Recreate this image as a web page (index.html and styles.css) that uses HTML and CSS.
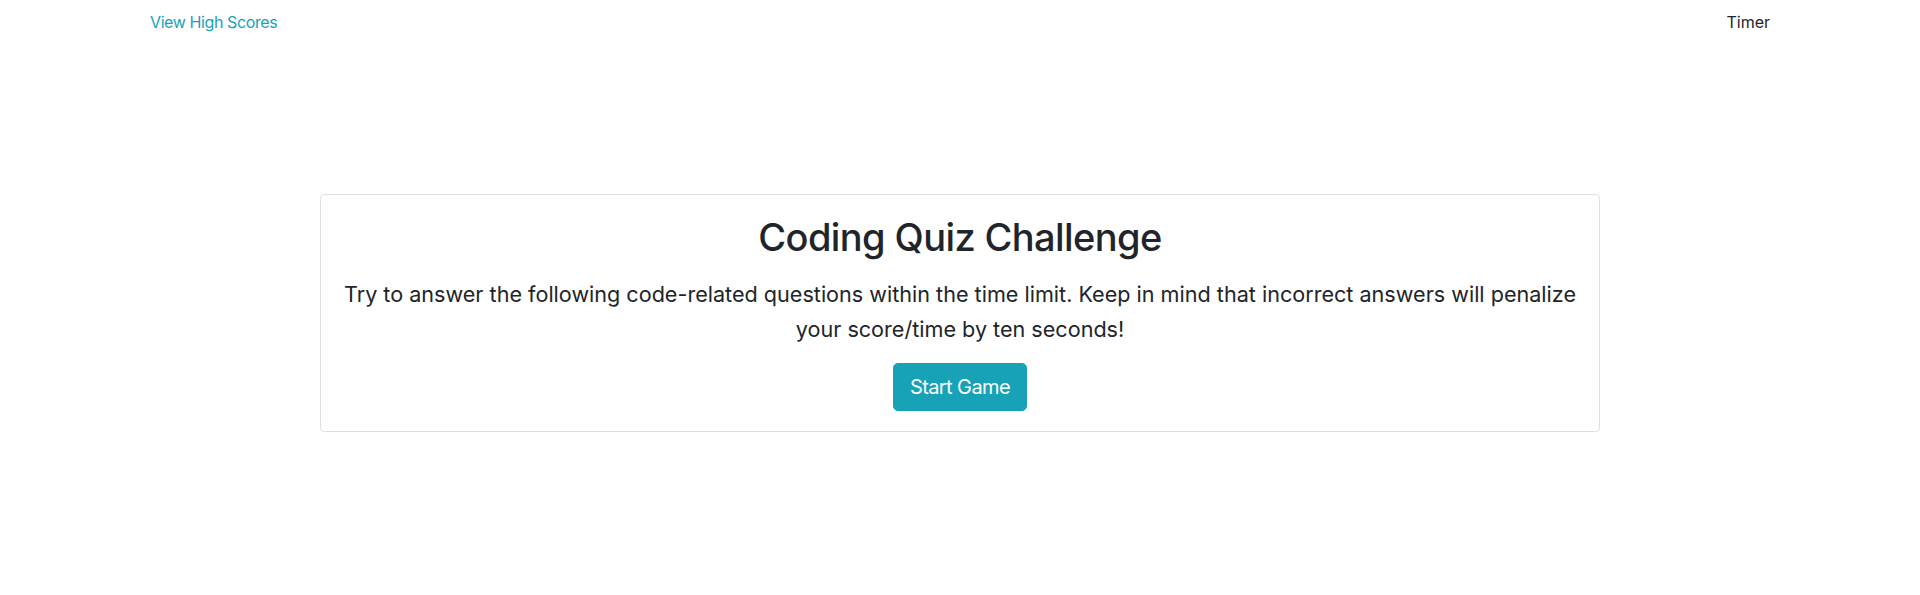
FILE: index.html
```html
<!DOCTYPE html>
<html lang="en">
<head>
<meta charset="utf-8">
<title>Coding Quiz</title>
<link rel="stylesheet" href="styles.css">
</head>
<body>
<header class="topbar">
  <a class="scores-link" href="#">View High Scores</a>
  <span class="timer">Timer</span>
</header>
<main class="main">
  <section class="card">
    <h1 class="card-title">Coding Quiz Challenge</h1>
    <p class="lead">Try to answer the following code-related questions within the time limit. Keep in mind that incorrect answers will penalize your score/time by ten seconds!</p>
    <button class="btn-start" type="button">Start Game</button>
  </section>
</main>
</body>
</html>
```
FILE: styles.css
```css
* { box-sizing: border-box; }
html, body { margin: 0; padding: 0; }
body {
  font-family: Inter, "Liberation Sans", sans-serif;
  color: #212529;
  background: #fff;
  font-size: 16px;
  line-height: 1.5;
}
.topbar {
  display: flex;
  justify-content: space-between;
  align-items: center;
  padding: 0 150px;
  height: 44px;
}
.scores-link {
  color: #17a2b8;
  text-decoration: none;
  letter-spacing: -0.4px;
}
.timer { color: #212529; }
.main {
  padding-top: 150px;
  display: flex;
  justify-content: center;
}
.card {
  width: 1280px;
  border: 1px solid rgba(0,0,0,.125);
  border-radius: 4px;
  padding: 20px;
  text-align: center;
}
.card-title {
  margin: 0 0 16px;
  font-size: 38px;
  font-weight: 500;
  line-height: 1.2;
  letter-spacing: -0.6px;
}
.lead {
  margin: 0 0 16px;
  font-size: 21.6px;
  line-height: 35px;
  font-weight: 400;
}
.btn-start {
  font-family: inherit;
  font-size: 20px;
  line-height: 1.5;
  padding: 8px 16px;
  color: #fff;
  background: #17a2b8;
  border: 1px solid #17a2b8;
  border-radius: 4.8px;
  cursor: pointer;
  letter-spacing: -0.6px;
}
```
